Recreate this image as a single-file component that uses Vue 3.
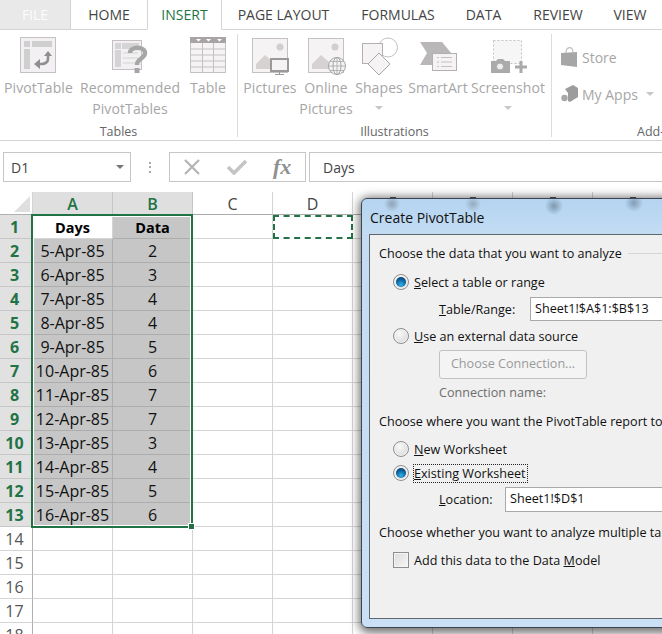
<script setup>
const tabs = [
  { name: 'HOME', cls: 'w-home' },
  { name: 'INSERT', cls: 'w-insert active' },
  { name: 'PAGE LAYOUT', cls: 'w-layout' },
  { name: 'FORMULAS', cls: 'w-formulas' },
  { name: 'DATA', cls: 'w-data' },
  { name: 'REVIEW', cls: 'w-review' },
  { name: 'VIEW', cls: 'w-view' }
]

// E-H sit under the dialog, only the tops of their letters peek out
const columns = ['A', 'B', 'C', 'D', '', '', '', '']

const data = [
  ['Days', 'Data'],
  ['5-Apr-85', 2],
  ['6-Apr-85', 3],
  ['7-Apr-85', 4],
  ['8-Apr-85', 4],
  ['9-Apr-85', 5],
  ['10-Apr-85', 6],
  ['11-Apr-85', 7],
  ['12-Apr-85', 7],
  ['13-Apr-85', 3],
  ['14-Apr-85', 4],
  ['15-Apr-85', 5],
  ['16-Apr-85', 6]
]

const rows = Array.from({ length: 18 }, (_, i) => i + 1)

const cellText = (row, col) => {
  const line = data[row - 1]
  return line && col < 2 ? line[col] : ''
}

const cellClass = (row, col) => ({
  sel: row <= 13 && col < 2 && !(row === 1 && col === 0),
  head: row === 1 && col < 2,
  ants: row === 1 && col === 3
})
</script>

<template>
  <div class="page">
    <div class="tabs">
      <div class="tab file">FILE</div>
      <div v-for="tab in tabs" :key="tab.name" class="tab" :class="tab.cls">{{ tab.name }}</div>
    </div>

    <div class="ribbon">
      <section class="group g-tables">
        <div class="items">
          <div class="item w-pivot">
            <svg class="icon" width="37" height="38" viewBox="0 0 37 38">
              <rect x="0.5" y="0.5" width="35" height="35" fill="#f2f0f2" stroke="#c4c0c4" />
              <rect x="4" y="4" width="6" height="6" fill="#cfcfcf" />
              <rect x="12" y="4" width="20" height="6" fill="#cfcfcf" />
              <rect x="4" y="12" width="6" height="20" fill="#cfcfcf" />
              <path d="M28 18v4c0 3-3 5-6 5h-3" fill="none" stroke="#8f8f8f" stroke-width="2.6" />
              <path d="M24 19l4-5 4 5zM20 22l-6 5 6 5z" fill="#8f8f8f" />
            </svg>
            <span>PivotTable</span>
          </div>
          <div class="item w-rec">
            <svg class="icon" width="37" height="38" viewBox="0 0 37 38">
              <rect x="0.5" y="3.5" width="29" height="29" fill="#f2f0f2" stroke="#c4c0c4" />
              <rect x="3" y="6" width="6" height="6" fill="#d4d4d4" />
              <rect x="10" y="6" width="17" height="6" fill="#d4d4d4" />
              <rect x="3" y="13" width="6" height="17" fill="#d4d4d4" />
              <path d="M11 16h15M11 21h15M11 26h15" stroke="#e2e2e2" stroke-width="2" />
              <path d="M18 16c0-7 15-7 15 0 0 6-8 5-8 12" fill="none" stroke="#a6a6a6" stroke-width="4.4" />
              <rect x="22.5" y="31" width="5" height="5" fill="#a6a6a6" />
            </svg>
            <span>Recommended</span>
            <span>PivotTables</span>
          </div>
          <div class="item w-table">
            <svg class="icon" width="37" height="38" viewBox="0 0 37 38">
              <rect x="0.5" y="0.5" width="35" height="35" fill="#f5f3f3" stroke="#c4c0c4" />
              <rect x="0" y="0" width="36" height="6" fill="#a8a4a6" />
              <path d="M6 2h5l-2.5 2.5zM16 2h5l-2.5 2.5zM27 2h5l-2.5 2.5z" fill="#fff" />
              <path d="M0 12h36M0 18h36M0 24h36M0 30h36M12.5 6v30M23.5 6v30" stroke="#c4c0c4" />
            </svg>
            <span>Table</span>
          </div>
        </div>
        <div class="group-name">Tables</div>
      </section>

      <section class="group g-illus">
        <div class="items">
          <div class="item w-pictures">
            <svg class="icon" width="40" height="38" viewBox="0 0 40 38">
              <rect x="2.5" y="1.5" width="35" height="34" fill="#f5f3f3" stroke="#c4c0c4" />
              <circle cx="30" cy="10" r="3.5" fill="#cfcfcf" />
              <path d="M6 32V27l9-9 8 7 3 7z" fill="#d6d2d2" />
              <rect x="21" y="22" width="17" height="12" fill="#f5f3f3" stroke="#9a9a9a" stroke-width="2" />
              <path d="M29.500 34v3M25 37.500h9" stroke="#9a9a9a" />
            </svg>
            <span>Pictures</span>
          </div>
          <div class="item w-online">
            <svg class="icon" width="40" height="38" viewBox="0 0 40 38">
              <rect x="2.5" y="1.5" width="35" height="34" fill="#f5f3f3" stroke="#c4c0c4" />
              <circle cx="29" cy="10" r="3.5" fill="#cfcfcf" />
              <path d="M6 32V27l9-9 8 7 2 7z" fill="#d6d2d2" />
              <circle cx="31" cy="29" r="8.500" fill="#f5f3f3" stroke="#a6a6a6" />
              <ellipse cx="31" cy="29" rx="4" ry="8.500" fill="none" stroke="#a6a6a6" />
              <path d="M22.500 29h17M24 24.500h14M24 33.500h14M31 20.500v17" stroke="#a6a6a6" stroke-width="0.8" />
            </svg>
            <span>Online</span>
            <span>Pictures</span>
          </div>
          <div class="item w-shapes">
            <svg class="icon" width="40" height="38" viewBox="0 0 40 38">
              <circle cx="29" cy="10.500" r="9.500" fill="#fff" stroke="#c4c0c4" />
              <rect x="3.500" y="6.500" width="20" height="20" fill="#f5f3f3" stroke="#b4b0b0" />
              <path d="M20 16l11 11-11 11-11-11z" fill="#f5f3f3" stroke="#a8a8a8" />
            </svg>
            <span>Shapes</span>
            <i class="caret"></i>
          </div>
          <div class="item w-smartart">
            <svg class="icon" width="40" height="38" viewBox="0 0 40 38">
              <path d="M2 5h22l10 12H14v11H2l7-12z" fill="#b9b7b7" />
              <rect x="14.500" y="16.500" width="24" height="17" fill="#f5f3f3" stroke="#b4b0b0" />
              <path d="M19 20.500h2M23 20.500h11M19 25h2M23 25h11M19 29.500h2M23 29.500h11" stroke="#c4c0c4" />
            </svg>
            <span>SmartArt</span>
          </div>
          <div class="item w-screenshot">
            <svg class="icon" width="40" height="38" viewBox="0 0 40 38">
              <rect x="5.500" y="3.500" width="28" height="23" fill="#f7f6f6" stroke="#c4c0c4" stroke-dasharray="2 2" />
              <path d="M3 24h5l2-2h5l2 2h5v12H3z" fill="#aaa" />
              <circle cx="12" cy="29.500" r="3.500" fill="#eee" stroke="#aaa" />
              <path d="M27 30h12M33 24v12" stroke="#aaa" stroke-width="3" />
            </svg>
            <span>Screenshot</span>
            <i class="caret"></i>
          </div>
        </div>
        <div class="group-name">Illustrations</div>
      </section>

      <section class="group g-addins">
        <div class="small-items">
          <div class="small">
            <svg width="17" height="20" viewBox="0 0 17 20">
              <path d="M0 6l16 -1v15l-16-2z" fill="#a6a6a6" />
              <path d="M5 6c0-7 7-7 7 -1" fill="none" stroke="#bdbdbd" stroke-width="1.2" />
            </svg>
            <span>Store</span>
          </div>
          <div class="small">
            <svg width="17" height="20" viewBox="0 0 17 20">
              <path d="M4 5l8-4 5 3v9l-8 5-2-1V9z" fill="#9c9c9c" />
              <circle cx="3.5" cy="14" r="3.2" fill="#a8a8a8" />
            </svg>
            <span>My Apps</span>
            <i class="caret apps"></i>
          </div>
        </div>
        <div class="group-name">Add-ins</div>
      </section>
    </div>

    <div class="formula">
      <div class="namebox">
        <span>D1</span>
        <i class="caret dark"></i>
      </div>
      <div class="dots"></div>
      <div class="fx-buttons">
        <svg width="18" height="16" viewBox="0 0 18 16">
          <path d="M2 1l14 14M16 1L2 15" stroke="#b4b4b4" stroke-width="2.2" />
        </svg>
        <svg width="20" height="16" viewBox="0 0 20 16">
          <path d="M1 8l6 6L19 2" fill="none" stroke="#c4c4c4" stroke-width="3.6" />
        </svg>
        <span class="fx">fx</span>
      </div>
      <div class="formula-input">Days</div>
    </div>

    <div class="sheet">
      <div class="corner"><i></i></div>
      <div
        v-for="(col, c) in columns"
        :key="c"
        class="col-head"
        :class="{ on: c < 2, under: c > 3 }"
      >{{ col }}</div>
      <template v-for="row in rows" :key="row">
        <div class="row-head" :class="{ on: row <= 13 }">{{ row }}</div>
        <div
          v-for="(col, c) in columns"
          :key="c"
          class="cell"
          :class="cellClass(row, c)"
        >{{ cellText(row, c) }}</div>
      </template>
      <div class="selection"><i></i></div>
    </div>

    <div class="dialog">
      <div class="title">Create PivotTable</div>
      <div class="panel">
        <div class="legend"><span>Choose the data that you want to analyze</span><i></i></div>
        <div class="opt first"><i class="radio checked"></i><span><u>S</u>elect a table or range</span></div>
        <div class="field f-range">
          <label><u>T</u>able/Range:</label>
          <div class="input">Sheet1!$A$1:$B$13</div>
        </div>
        <div class="opt second"><i class="radio"></i><span><u>U</u>se an external data source</span></div>
        <div class="btn">Choose Connection...</div>
        <div class="conn">Connection name:</div>
        <div class="legend where"><span>Choose where you want the PivotTable report to be placed</span></div>
        <div class="opt third"><i class="radio"></i><span><u>N</u>ew Worksheet</span></div>
        <div class="opt fourth"><i class="radio checked"></i><span class="focus"><u>E</u>xisting Worksheet</span></div>
        <div class="field f-loc">
          <label><u>L</u>ocation:</label>
          <div class="input">Sheet1!$D$1</div>
        </div>
        <div class="legend whether"><span>Choose whether you want to analyze multiple tables</span></div>
        <div class="opt fifth"><i class="check"></i><span>Add this data to the Data <u>M</u>odel</span></div>
      </div>
    </div>
  </div>
</template>

<style scoped>
.page {
  position: relative;
  width: 662px;
  height: 634px;
  overflow: hidden;
  background: #fff;
  font-family: "Open Sans", "Noto Sans", sans-serif;
  color: #222;
}

/* Tabs */
.tabs {
  display: flex;
  height: 30px;
  border-bottom: 1px solid #d4d4d4;
  box-sizing: border-box;
}

.tab {
  flex: none;
  height: 29px;
  box-sizing: border-box;
  display: flex;
  align-items: center;
  justify-content: center;
  font-size: 14px;
  color: #444;
}

.file {
  width: 71px;
  background: #e9e9e9;
  border-right: 1px solid #d4d4d4;
  color: #fbfbfb;
}

.w-home { width: 76px; }
.w-insert { width: 75px; }
.w-layout { width: 123px; }
.w-formulas { width: 106px; }
.w-data { width: 65px; }
.w-review { width: 84px; }
.w-view { width: 60px; }

.active {
  height: 30px;
  color: #217346;
  border: 1px solid #d4d4d4;
  border-top: none;
  border-bottom: 1px solid #fff;
}

/* Ribbon */
.ribbon {
  display: flex;
  height: 111px;
  border-bottom: 1px solid #d4d4d4;
  box-sizing: border-box;
  overflow: hidden;
}

.group {
  flex: none;
  box-sizing: border-box;
  display: flex;
  flex-direction: column;
  margin-top: 4px;
  height: 103px;
  border-right: 1px solid #dcdcdc;
}

.g-tables { width: 238px; }
.g-illus { width: 314px; }
.g-addins { width: 214px; border-right: none; }

.items {
  display: flex;
  height: 83px;
}

.item {
  flex: none;
  display: flex;
  flex-direction: column;
  align-items: center;
  font-size: 14px;
  line-height: 21px;
  color: #a6a6a6;
  letter-spacing: 0.1px;
  white-space: nowrap;
}

.icon {
  flex: none;
  margin: 3px 0 2px;
}

.w-pivot { width: 77px; }
.w-rec { width: 106px; }
.w-table { width: 50px; }
.w-pictures { width: 64px; }
.w-online { width: 48px; }
.w-shapes { width: 58px; }
.w-smartart { width: 60px; }
.w-screenshot { width: 80px; }

.caret {
  display: block;
  width: 0;
  height: 0;
  margin-top: 8px;
  border: 4px solid transparent;
  border-top-color: #c8c8c8;
  border-bottom: none;
}

.caret.apps {
  margin: 0 0 0 4px;
}

.caret.dark {
  margin: 0;
  border-top-color: #777;
}

.group-name {
  margin-top: auto;
  height: 20px;
  line-height: 30px;
  text-align: center;
  font-size: 12.5px;
  color: #666;
}

.small-items {
  display: flex;
  flex-direction: column;
  gap: 17px;
  height: 83px;
  padding: 13px 0 0 9px;
  box-sizing: border-box;
}

.small {
  display: flex;
  align-items: center;
  gap: 4px;
  height: 20px;
  font-size: 14px;
  color: #a6a6a6;
}

/* Formula bar */
.formula {
  display: flex;
  align-items: center;
  height: 30px;
  margin-top: 11px;
  padding-left: 3px;
}

.namebox {
  width: 128px;
  height: 30px;
  box-sizing: border-box;
  border: 1px solid #c6c6c6;
  display: flex;
  align-items: center;
  justify-content: space-between;
  padding: 0 6px 0 7px;
  font-size: 14px;
  color: #444;
}

.dots {
  width: 2px;
  height: 11px;
  margin: 0 18px;
  background: repeating-linear-gradient(#aaa 0 2px, transparent 2px 4.5px);
}

.fx-buttons {
  width: 137px;
  height: 30px;
  box-sizing: border-box;
  border: 1px solid #c6c6c6;
  display: flex;
  align-items: center;
  gap: 26px;
  padding-left: 13px;
}

.fx {
  font-family: "Liberation Serif", serif;
  font-style: italic;
  font-weight: 700;
  font-size: 22px;
  color: #909090;
}

.formula-input {
  flex: 1;
  height: 30px;
  margin-left: 3px;
  box-sizing: border-box;
  border: 1px solid #c6c6c6;
  border-right: none;
  display: flex;
  align-items: center;
  padding-left: 13px;
  font-size: 14px;
  color: #444;
}

/* Sheet */
.sheet {
  position: relative;
  display: grid;
  grid-template-columns: 33px repeat(8, 80px);
  grid-template-rows: 23px;
  grid-auto-rows: 24px;
  margin-top: 10px;
}

.corner {
  position: relative;
  border-right: 1px solid #d4d4d4;
  border-bottom: 1px solid #b0b0b0;
  box-sizing: border-box;
}

.corner i {
  position: absolute;
  right: 2px;
  bottom: 2px;
  width: 0;
  height: 0;
  border-left: 16px solid transparent;
  border-bottom: 16px solid #dfdfdf;
}

.col-head {
  position: relative;
  box-sizing: border-box;
  border-right: 1px solid #d4d4d4;
  border-bottom: 1px solid #aaa;
  text-align: center;
  font-size: 16px;
  line-height: 24px;
  color: #444;
}

.col-head.under::after {
  content: "";
  position: absolute;
  left: 37px;
  top: 5px;
  width: 6px;
  height: 1px;
  background: #555;
}

.col-head.on {
  background: #dfdfdf;
  color: #217346;
  font-weight: 600;
  border-right-color: #c6c6c6;
}

.row-head {
  box-sizing: border-box;
  border-right: 1px solid #b0b0b0;
  border-bottom: 1px solid #d4d4d4;
  text-align: center;
  font-size: 16px;
  line-height: 25px;
  color: #555;
  padding-right: 3px;
}

.row-head.on {
  background: #e1e1e1;
  color: #217346;
  font-weight: 700;
  border-bottom-color: #c6c6c6;
}

.cell {
  box-sizing: border-box;
  border-right: 1px solid #d4d4d4;
  border-bottom: 1px solid #d4d4d4;
  text-align: center;
  font-size: 16px;
  line-height: 25px;
  color: #111;
}

.cell.sel {
  background: #c6c6c6;
  border-color: #adadad;
}

.cell.head {
  font-size: 14.5px;
  font-weight: 700;
  color: #000;
}

.cell.ants {
  border: 2px dashed #217346;
}

.selection {
  position: absolute;
  left: 31px;
  top: 22px;
  width: 162px;
  height: 314px;
  box-sizing: border-box;
  border: 2px solid #217346;
  box-shadow: inset 0 0 0 1px #fff;
}

.selection i {
  position: absolute;
  right: -4px;
  bottom: -4px;
  width: 5px;
  height: 5px;
  background: #217346;
  border: 1px solid #fff;
}

/* Dialog */
.dialog {
  position: absolute;
  left: 361px;
  top: 198px;
  width: 340px;
  height: 430px;
  box-sizing: border-box;
  border: 1px solid #3d4650;
  border-radius: 6px;
  padding: 0 7px 8px;
  display: flex;
  flex-direction: column;
  background:
    radial-gradient(circle 8px at 30px 5px, rgba(110, 120, 130, 0.55), transparent),
    radial-gradient(circle 8px at 111px 5px, rgba(110, 120, 130, 0.45), transparent),
    radial-gradient(circle 9px at 192px 7px, rgba(90, 110, 130, 0.6), transparent),
    radial-gradient(circle 9px at 272px 4px, rgba(90, 110, 130, 0.55), transparent),
    linear-gradient(#b4d4f1, #c3dcf3 35px, #c9e0f6);
  box-shadow: 1px 2px 10px 3px rgba(0, 0, 0, 0.55);
}

.title {
  height: 35px;
  flex: none;
  line-height: 37px;
  margin-left: 1px;
  font-size: 14px;
  color: #111;
}

.panel {
  flex: 1;
  box-sizing: border-box;
  border: 1px solid #5f666e;
  background: #f0f0f0;
  padding: 8px 0 0 9px;
  font-size: 12.6px;
  color: #111;
  white-space: nowrap;
}

.legend {
  display: flex;
  align-items: center;
  gap: 6px;
  height: 20px;
}

.legend i {
  flex: 1;
  height: 1px;
  background: #d5d5d5;
}

.where { margin-top: 8px; }
.whether { margin-top: 10px; }

.opt {
  display: flex;
  align-items: center;
  gap: 5px;
  height: 20px;
  margin-left: 14px;
}

.first { margin-top: 9px; }
.second { margin-top: 5px; }
.third { margin-top: 8px; }
.fourth { margin-top: 4px; }
.fifth { margin-top: 8px; }

.radio {
  flex: none;
  position: relative;
  width: 14px;
  height: 14px;
  border: 1px solid #8e8e8e;
  border-radius: 50%;
  background: radial-gradient(circle at 40% 35%, #f8f8f8, #dadada 80%);
  box-shadow: inset 0 0 0 1px #f4f4f4;
}

.radio.checked::after {
  content: "";
  position: absolute;
  left: 2px;
  top: 2px;
  width: 10px;
  height: 10px;
  border-radius: 50%;
  background: radial-gradient(circle at 50% 75%, #2fb2ea, #0c5f9a 55%, #0b3f66);
}

.check {
  flex: none;
  width: 16px;
  height: 16px;
  box-sizing: border-box;
  border: 1px solid #8e8e8e;
  background: linear-gradient(135deg, #dcdcdc, #f6f6f6);
  box-shadow: inset 0 0 0 1px #f4f4f4;
}

.focus {
  outline: 1px dotted #222;
  padding-right: 1px;
}

.field {
  display: flex;
  align-items: center;
  margin-left: 60px;
}

.field label { flex: none; }

.f-range {
  margin-top: 5px;
  height: 24px;
}

.f-range label { width: 91px; }
.f-loc label { width: 66px; }

.f-loc {
  margin-top: 4px;
  height: 25px;
}

.input {
  width: 240px;
  height: 100%;
  box-sizing: border-box;
  border: 1px solid #a9a9a9;
  background: #fff;
  padding-left: 4px;
  line-height: 22px;
}

.btn {
  width: 148px;
  height: 29px;
  margin: 4px 0 0 60px;
  box-sizing: border-box;
  border: 1px solid #c2c2c2;
  border-radius: 3px;
  background: #f4f4f4;
  text-align: center;
  line-height: 26px;
  color: #9a9a9a;
}

.conn {
  height: 20px;
  margin: 4px 0 0 60px;
  line-height: 20px;
  color: #6d6d6d;
}
</style>

<style>
html, body {
  margin: 0;
  overflow: hidden;
}
</style>
